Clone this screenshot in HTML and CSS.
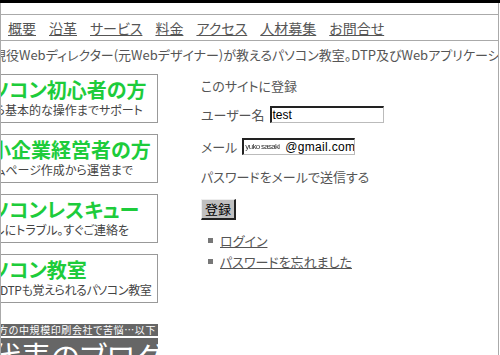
FILE: index.html
```html
<!DOCTYPE html>
<html lang="ja">
<head>
<meta charset="utf-8">
<title>サイトに登録</title>
<link rel="stylesheet" href="styles.css">
</head>
<body>
<div class="topbar"></div>
<div class="frame">
  <nav class="nav">
    <a href="#">概要</a>
    <a href="#">沿革</a>
    <a href="#">サービス</a>
    <a href="#">料金</a>
    <a href="#">アクセス</a>
    <a href="#">人材募集</a>
    <a href="#">お問合せ</a>
  </nav>
  <p class="tagline">現役Webディレクター(元Webデザイナー)が教えるパソコン教室。DTP及びWebアプリケーション開発も承ります。</p>
  <div class="main">
    <div class="side">
      <a class="box" href="#"><span class="box-title">パソコン初心者の方</span><span class="box-sub">一から基本的な操作までサポート</span></a>
      <a class="box" href="#"><span class="box-title">中小企業経営者の方</span><span class="box-sub">ホームページ作成から運営まで</span></a>
      <a class="box" href="#"><span class="box-title">パソコンレスキュー</span><span class="box-sub">メールにトラブル。すぐご連絡を</span></a>
      <a class="box" href="#"><span class="box-title">パソコン教室</span><span class="box-sub box-sub-tight">Web・DTPも覚えられるパソコン教室</span></a>
      <div class="promo">
        <div class="news"><span>地方の中規模印刷会社で苦悩…以下</span></div>
        <div class="blog">代表のブログ</div>
      </div>
    </div>
    <div class="content">
      <p class="heading">このサイトに登録</p>
      <div class="row row-user">
        <span class="label">ユーザー名</span>
        <span class="field field-user">test</span>
      </div>
      <div class="row row-mail">
        <span class="label">メール</span>
        <span class="field field-mail"><span class="masked">yuko sasaki</span><span>@gmail.com</span></span>
      </div>
      <p class="note">パスワードをメールで送信する</p>
      <button class="btn" type="button">登録</button>
      <ul class="links">
        <li><a href="#">ログイン</a></li>
        <li><a href="#">パスワードを忘れました</a></li>
      </ul>
    </div>
  </div>
</div>
</body>
</html>
```

FILE: styles.css
```css
html, body {
  margin: 0;
  padding: 0;
}

body {
  width: 500px;
  height: 355px;
  overflow: hidden;
  background: #fff;
  color: #555;
  font-family: "Noto Sans CJK JP", "Noto Sans", sans-serif;
  font-size: 13px;
  font-feature-settings: "palt";
}

.topbar {
  height: 3px;
  background: #000;
}

.frame {
  width: 499px;
  height: 352px;
  box-sizing: border-box;
  border-left: 1px solid #aaa;
  border-right: 1px solid #aaa;
  padding-top: 11px;
  overflow: hidden;
}

.nav {
  height: 25px;
  border-top: 1px solid #aaa;
  border-bottom: 1px solid #aaa;
  display: flex;
  align-items: center;
  gap: 13px;
  padding-left: 7px;
  font-size: 14px;
  line-height: 1;
}

.nav a {
  color: #555;
  text-decoration: underline;
}

.tagline {
  margin: 5px 0 0 -8px;
  font-size: 13px;
  line-height: 18px;
  white-space: nowrap;
}

.main {
  display: flex;
  margin-top: 10px;
}

.side {
  flex: none;
  width: 188px;
  margin-left: -31px;
  display: flex;
  flex-direction: column;
  gap: 11px;
}

.box {
  display: flex;
  flex-direction: column;
  height: 49px;
  box-sizing: border-box;
  border: 1px solid #999;
  padding-top: 3px;
  text-decoration: none;
  overflow: hidden;
  white-space: nowrap;
}

.box-title {
  color: #1dcc3b;
  font-weight: bold;
  font-size: 20px;
  line-height: 24px;
}

.box-sub {
  color: #444;
  font-size: 12px;
  line-height: 15px;
}

.box-sub-tight {
  letter-spacing: -0.4px;
}

.promo {
  margin-top: 10px;
  display: flex;
  flex-direction: column;
  gap: 2px;
}

.news {
  height: 12px;
  background: #666;
  color: #fff;
  display: flex;
  justify-content: flex-end;
  overflow: hidden;
  padding-right: 2px;
  font-size: 10px;
  line-height: 12px;
  letter-spacing: 0.6px;
  white-space: nowrap;
}

.blog {
  height: 40px;
  background: #666;
  color: #fff;
  font-size: 30px;
  line-height: 34px;
  padding-left: 21px;
  white-space: nowrap;
  overflow: hidden;
}

.content {
  margin-left: 43px;
  display: flex;
  flex-direction: column;
  align-items: flex-start;
}

.heading {
  margin: 3px 0 0;
  line-height: 18px;
}

.row {
  display: flex;
  align-items: center;
  gap: 5px;
  line-height: 17px;
}

.row-user {
  margin-top: 11px;
}

.row-mail {
  margin-top: 15px;
}

.field {
  display: flex;
  align-items: center;
  height: 17px;
  box-sizing: border-box;
  border-top: 2px solid #222;
  border-left: 2px solid #222;
  border-right: 1px solid #bbb;
  border-bottom: 1px solid #bbb;
  background: #fff;
  color: #000;
  font-family: "Liberation Sans", Arial, sans-serif;
  font-size: 12px;
  line-height: 14px;
  padding-left: 1px;
  white-space: nowrap;
  overflow: hidden;
}

.field-user {
  width: 114px;
}

.field-mail {
  width: 113px;
  letter-spacing: 0.3px;
}

.masked {
  flex: none;
  width: 40px;
  font-size: 8px;
  letter-spacing: -0.7px;
  color: #333;
  filter: blur(0.45px);
  overflow: hidden;
}

.note {
  margin: 13px 0 0;
  line-height: 18px;
}

.btn {
  margin-top: 13px;
  width: 35px;
  height: 21px;
  padding: 0;
  background: #c0c0c0;
  border-top: 1px solid #eee;
  border-left: 1px solid #eee;
  border-right: 2px solid #222;
  border-bottom: 2px solid #222;
  color: #000;
  font-family: "Noto Sans CJK JP", sans-serif;
  font-size: 13px;
  line-height: 16px;
}

.links {
  list-style: none;
  margin: 10px 0 0;
  padding: 0;
}

.links li {
  display: flex;
  align-items: center;
  line-height: 21px;
}

.links li::before {
  content: "";
  width: 5px;
  height: 5px;
  background: #777;
  margin: 0 7px 0 7px;
}

.links a {
  color: #555;
  text-decoration: underline;
}
```
